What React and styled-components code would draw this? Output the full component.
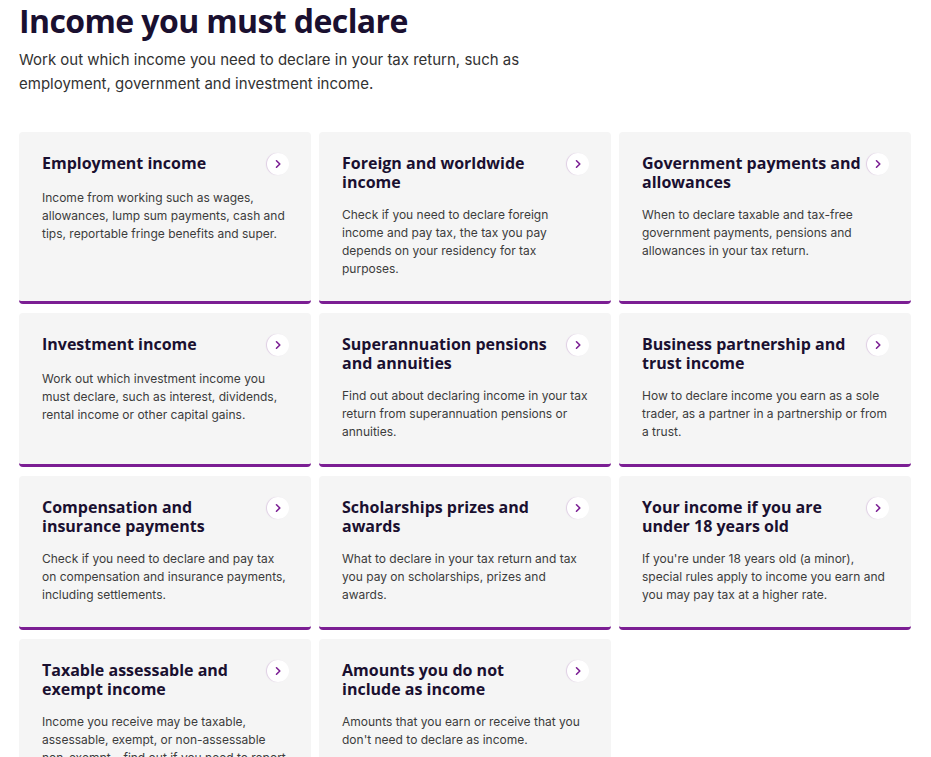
import React from "react";
import styled, { createGlobalStyle } from "styled-components";

const cards = [
  {
    title: "Employment income",
    text: "Income from working such as wages, allowances, lump sum payments, cash and tips, reportable fringe benefits and super.",
  },
  {
    title: "Foreign and worldwide income",
    text: "Check if you need to declare foreign income and pay tax, the tax you pay depends on your residency for tax purposes.",
  },
  {
    title: "Government payments and allowances",
    text: "When to declare taxable and tax-free government payments, pensions and allowances in your tax return.",
  },
  {
    title: "Investment income",
    text: "Work out which investment income you must declare, such as interest, dividends, rental income or other capital gains.",
  },
  {
    title: "Superannuation pensions and annuities",
    text: "Find out about declaring income in your tax return from superannuation pensions or annuities.",
  },
  {
    title: "Business partnership and trust income",
    text: "How to declare income you earn as a sole trader, as a partner in a partnership or from a trust.",
  },
  {
    title: "Compensation and insurance payments",
    text: "Check if you need to declare and pay tax on compensation and insurance payments, including settlements.",
  },
  {
    title: "Scholarships prizes and awards",
    text: "What to declare in your tax return and tax you pay on scholarships, prizes and awards.",
  },
  {
    title: "Your income if you are under 18 years old",
    text: "If you're under 18 years old (a minor), special rules apply to income you earn and you may pay tax at a higher rate.",
  },
  {
    title: "Taxable assessable and exempt income",
    text: "Income you receive may be taxable, assessable, exempt, or non-assessable non-exempt – find out if you need to report it in your tax return.",
  },
  {
    title: "Amounts you do not include as income",
    text: "Amounts that you earn or receive that you don't need to declare as income.",
  },
];

const Chevron = () => (
  <svg width="10" height="10" viewBox="0 0 10 10" fill="none">
    <path d="M3.5 1.8 L6.8 5 L3.5 8.2" stroke="#7b1e93" strokeWidth="1.6" strokeLinecap="round" strokeLinejoin="round" />
  </svg>
);

const App = () => {
  return (
    <Page>
      <GlobalStyle />
      <Title>Income you must declare</Title>
      <Intro>
        Work out which income you need to declare in your tax return, such as
        employment, government and investment income.
      </Intro>
      <Grid>
        {cards.map((c, idx) => (
          <Card key={idx} href="#">
            <CardHead>
              <CardTitle>{c.title}</CardTitle>
              <ArrowCircle>
                <Chevron />
              </ArrowCircle>
            </CardHead>
            <CardText>{c.text}</CardText>
          </Card>
        ))}
      </Grid>
    </Page>
  );
};

const GlobalStyle = createGlobalStyle`
  body {
    margin: 0;
    background: #ffffff;
    font-family: Inter, "Noto Sans", sans-serif;
  }
`;

const Page = styled.div`
  width: 892px;
  padding: 0 0 0 19px;
`;

const Title = styled.h1`
  margin: 0;
  padding-top: 1px;
  font-family: "Open Sans", "Noto Sans", sans-serif;
  font-size: 32px;
  line-height: 40px;
  font-weight: 700;
  letter-spacing: -0.6px;
  color: #1a1030;
`;

const Intro = styled.p`
  margin: 7px 0 0;
  max-width: 510px;
  font-size: 15px;
  line-height: 24px;
  color: #323232;
`;

const Grid = styled.div`
  display: grid;
  grid-template-columns: repeat(3, 1fr);
  column-gap: 8px;
  row-gap: 9px;
  margin-top: 36px;
`;

const Card = styled.a`
  display: flex;
  flex-direction: column;
  gap: 14px;
  padding: 22px 22px 23px 23px;
  background: #f5f5f5;
  border-bottom: 3px solid #7b1e93;
  border-radius: 4px;
  text-decoration: none;
`;

const CardHead = styled.div`
  display: flex;
  justify-content: space-between;
  align-items: flex-start;
  gap: 4px;
`;

const CardTitle = styled.div`
  font-family: "Open Sans", "Noto Sans", sans-serif;
  font-size: 16px;
  line-height: 19px;
  font-weight: 700;
  color: #1a1030;
`;

const ArrowCircle = styled.span`
  flex: none;
  width: 22px;
  height: 22px;
  margin-top: -1px;
  border-radius: 50%;
  background: #ffffff;
  box-shadow: -1px 0 1px rgba(123, 30, 147, 0.18);
  display: flex;
  align-items: center;
  justify-content: center;
`;

const CardText = styled.div`
  font-size: 12px;
  line-height: 18px;
  color: #3c3c3c;
`;

export default App;
